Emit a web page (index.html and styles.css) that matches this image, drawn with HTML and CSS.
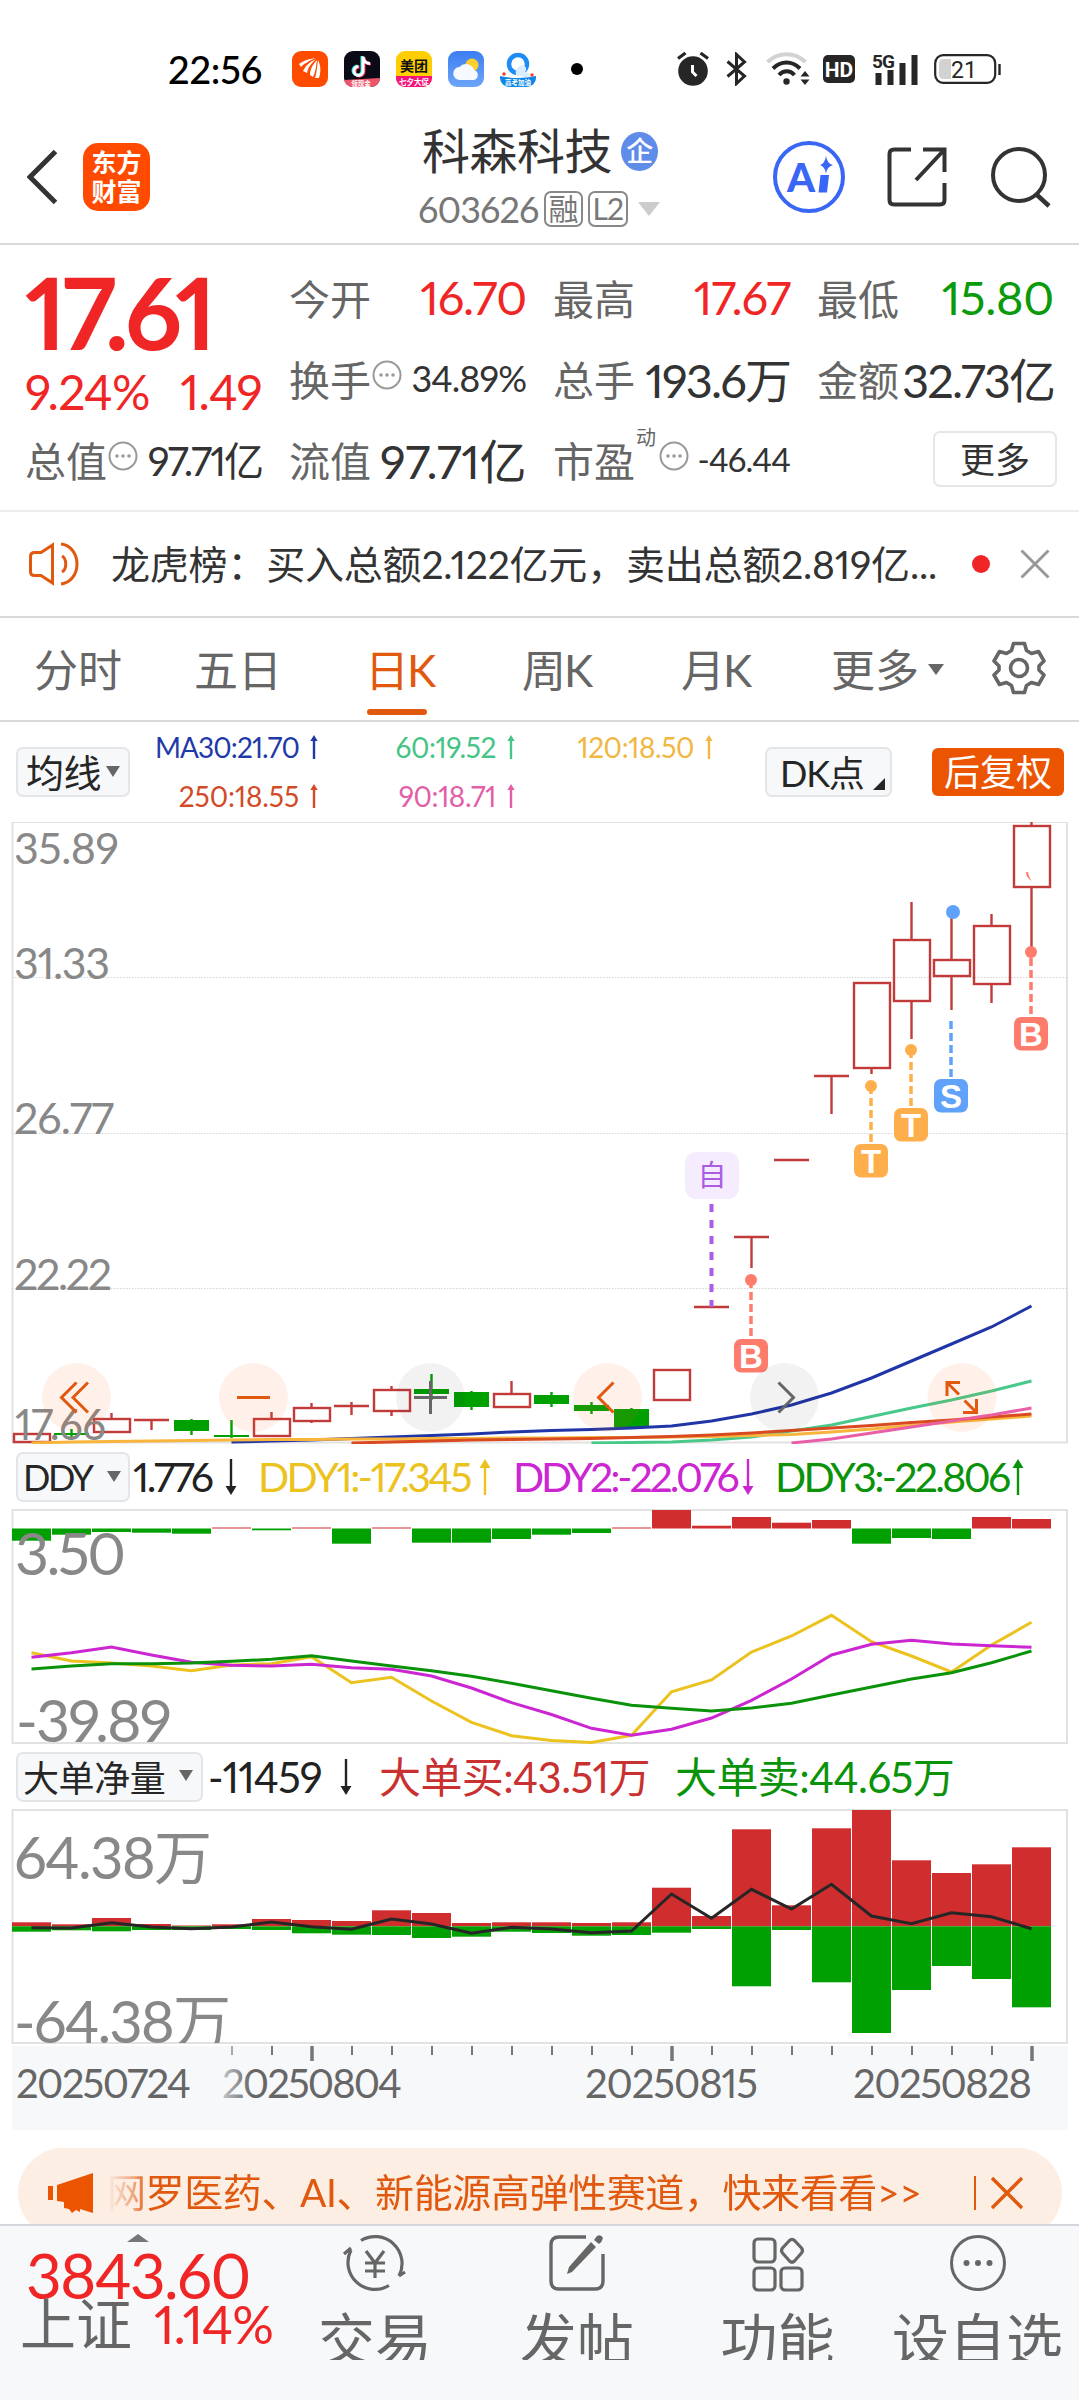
FILE: index.html
```html
<!DOCTYPE html>
<html lang="zh-CN">
<head>
    <meta charset="UTF-8">
    <meta name="viewport" content="width=device-width, initial-scale=1.0">
    <title>科森科技 603626</title>
    <link rel="stylesheet" href="styles.css">
</head>
<body>
    <svg class="defs" width="0" height="0">
        <symbol id="up" viewBox="0 0 12 36"><path d="M6 36V8" stroke="currentColor" stroke-width="2.4" vector-effect="non-scaling-stroke"/><path d="M6 0l5.5 9H.5z" fill="currentColor"/></symbol>
        <symbol id="down" viewBox="0 0 12 36"><path d="M6 0v28" stroke="currentColor" stroke-width="2.4" vector-effect="non-scaling-stroke"/><path d="M6 36l5.5-9H.5z" fill="currentColor"/></symbol>
        <symbol id="more" viewBox="0 0 30 30"><circle cx="15" cy="15" r="13.5" fill="none" stroke="#999" stroke-width="2"/><g fill="#999"><circle cx="9" cy="15" r="1.8"/><circle cx="15" cy="15" r="1.8"/><circle cx="21" cy="15" r="1.8"/></g></symbol>
    </svg>

    <div class="status-bar">
        <span class="clock">22:56</span>
        <div class="status-apps">
            <svg width="36" height="36" viewBox="0 0 36 36"><rect width="36" height="36" rx="9" fill="#ff4b00"/><g fill="#fff"><path d="M7 13c4-3 9-5 17-6-7 3-11 5-15 9z"/><path d="M11 20c3-6 7-9 13-12-5 5-8 8-9 14z"/><path d="M18 24c0-6 3-11 7-15-1 6-1 11-4 17z"/><path d="M23 27c2-6 2-12 3-18 3 6 3 12 1 18z"/></g></svg>
            <svg width="36" height="36" viewBox="0 0 36 36"><rect width="36" height="36" rx="9" fill="#0b0a17"/><g fill="none" stroke-width="3"><path d="M18 5v14.500a4.500 4.500 0 1 1-4.500-4.500M18 6c1 4 3 6 7 6" stroke="#26f0e6"/><path d="M20 6v14.500a4.500 4.500 0 1 1-4.500-4.500M20 7c1 4 3 6 7 6" stroke="#fe2c55"/><path d="M19 5.500V20a4.500 4.500 0 1 1-4.500-4.500M19 6.500c1 4 3 6 7 6" stroke="#fff"/></g><path d="M0 29l36-2a9 9 0 0 1-9 9H9a9 9 0 0 1-9-7z" fill="#f0566b"/><text x="17" y="34.500" class="app-tag" font-size="6.500">领现金</text></svg>
            <svg width="36" height="36" viewBox="0 0 36 36"><rect width="36" height="36" rx="9" fill="#ffce00"/><path d="M0 25h36v2a9 9 0 0 1-9 9H9a9 9 0 0 1-9-9z" fill="#f5137c"/><text x="18" y="19.500" class="app-name" font-size="14">美团</text><text x="18" y="33.500" class="app-tag" font-size="7.500">七夕大促</text></svg>
            <svg width="36" height="36" viewBox="0 0 36 36"><defs><linearGradient id="sky" x2="0" y2="1"><stop offset="0" stop-color="#3c7df2"/><stop offset="1" stop-color="#6da6f8"/></linearGradient></defs><rect width="36" height="36" rx="9" fill="url(#sky)"/><circle cx="24" cy="14" r="6.500" fill="#ffd02e"/><path d="M12 29a6.500 6.500 0 0 1-.5-13 8.500 8.500 0 0 1 14.500 3 5.200 5.200 0 0 1 0 10z" fill="#f6f9ff"/></svg>
            <svg width="36" height="36" viewBox="0 0 36 36"><circle cx="18" cy="13" r="9" fill="none" stroke="#1f8cf5" stroke-width="4.500"/><path d="M16 24a8 8 0 0 1 6-10c5 1 5 5 3 7 5 0 6 4 3 6z" fill="#dcecff"/><path d="M0 25q18 4 36 0v2a9 9 0 0 1-9 9H9a9 9 0 0 1-9-9z" fill="#0d86e6"/><circle cx="4" cy="23" r="1.800" fill="#f0432e"/><circle cx="32" cy="24" r="1.800" fill="#f0432e"/><text x="18" y="33.500" class="app-tag" font-size="6.500">高考加油</text></svg>
        </div>
        <span class="status-dot"></span>
        <div class="status-right">
            <svg width="32" height="34" viewBox="0 0 32 34"><circle cx="16" cy="19" r="14.800" fill="#262626"/><path d="M1 6.500L8.500 1M31 6.500L23.500 1" stroke="#262626" stroke-width="3.200"/><path d="M15.500 13v7l4 4" fill="none" stroke="#fff" stroke-width="3"/></svg>
            <svg width="22" height="34" viewBox="0 0 22 34"><path d="M1.500 9.500l17 14.500-8 7.500V2.500l8 7.500L1.500 24.500" fill="none" stroke="#262626" stroke-width="3"/></svg>
            <svg width="44" height="34" viewBox="0 0 44 34"><g fill="none" stroke-width="4"><path d="M1.500 10c11-10.500 27-10.500 38 0" stroke="#d2d2d2"/><path d="M7 16.500c8-8 19-8 27 0M13 23c4.500-5 11-5 15.500 0" stroke="#262626"/></g><circle cx="20.500" cy="29.500" r="3.200" fill="#262626"/><path d="M39 19l4.500 5.500h-9zM39 33l4.500-5.500h-9z" fill="#262626"/></svg>
            <svg width="32" height="28" viewBox="0 0 32 28"><rect width="32" height="28" rx="5" fill="#262626"/><text x="16" y="21.500" class="hd-text">HD</text></svg>
            <svg width="46" height="33" viewBox="0 0 46 33"><text x="0" y="14.500" class="net-text">5G</text><path d="M3.500 20h6v12h-6zM15.500 17h6v15h-6zM27.500 10h6v22h-6zM39.500 2h6v30h-6z" fill="#262626"/></svg>
            <svg width="67" height="30" viewBox="0 0 67 30"><rect x="1.200" y="1.200" width="60" height="27.600" rx="8" fill="none" stroke="#262626" stroke-width="2.200"/><path d="M17 5v20H9q-4 0-4-5V10q0-5 4-5z" fill="#d2d2d2"/><path d="M65.500 10v11" stroke="#262626" stroke-width="2.400"/><text x="30" y="23.500" class="battery-text">21</text></svg>
        </div>
    </div>

    <header class="top-bar">
        <svg class="back" width="32" height="56" viewBox="0 0 32 56"><path d="M28.500 2.500L3 28l25.500 25.500" fill="none" stroke="#333" stroke-width="5"/></svg>
        <div class="logo"><span>东方</span><span>财富</span></div>
        <div class="stock-title">
            <div class="stock-name">科森科技<span class="badge-qi">企</span></div>
            <div class="stock-code">603626<span class="tag">融</span><span class="tag">L2</span><i class="caret-light"></i></div>
        </div>
        <div class="top-actions">
            <svg width="74" height="74" viewBox="0 0 74 74"><circle cx="37" cy="37" r="34" fill="none" stroke="#3a66f5" stroke-width="4"/><text x="15" y="52" class="ai-text">A</text><path d="M48.500 35h8.500l-2 17.500h-8.500z" fill="#3a66f5"/><path d="M54 16q1 7.500 7 9-6 1.500-7 9-1-7.500-6-9 5-1.500 6-9z" fill="#3a66f5"/></svg>
            <svg width="60" height="60" viewBox="0 0 60 60"><g fill="none" stroke="#333" stroke-width="4"><path d="M24 2.500H7q-4.500 0-4.500 4.500v46q0 4.500 4.500 4.500h46q4.500 0 4.500-4.500V36"/><path d="M36 2.500h21.500V25M57.500 2.500L29 33"/></g></svg>
            <svg width="62" height="62" viewBox="0 0 62 62"><circle cx="29" cy="29" r="26" fill="none" stroke="#333" stroke-width="4"/><path d="M46 48l13 12" stroke="#333" stroke-width="4.500"/></svg>
        </div>
    </header>

    <section class="quote">
        <div class="price-block">
            <div class="price">17.61</div>
            <div class="change"><span>9.24%</span><span>1.49</span></div>
        </div>
        <div class="cell"><label>今开</label><b class="red">16.70</b></div>
        <div class="cell"><label>最高</label><b class="red">17.67</b></div>
        <div class="cell"><label>最低</label><b class="green">15.80</b></div>
        <div class="cell small"><label>换手<svg class="more"><use href="#more"/></svg></label><b>34.89%</b></div>
        <div class="cell"><label>总手</label><b>193.6万</b></div>
        <div class="cell"><label>金额</label><b>32.73亿</b></div>
        <div class="cell mid"><label>总值<svg class="more"><use href="#more"/></svg></label><b>97.71亿</b></div>
        <div class="cell wide"><label>流值</label><b>97.71亿</b></div>
        <div class="cell tiny"><label>市盈<sup>动</sup><svg class="more"><use href="#more"/></svg></label><b>-46.44</b></div>
        <div class="cell last"><button class="btn-more">更多</button></div>
    </section>

    <section class="notice">
        <svg class="speaker" width="54" height="44" viewBox="0 0 54 44"><g fill="none" stroke="#e0590f" stroke-width="3"><path d="M23.500 3v38L12 33.500H5.500q-4 0-4-4v-15q0-4 4-4H12z"/><path d="M30 14c5 3 5 13 0 16M29 2c9 1 16 9 16 20s-7 19-16 20" transform="translate(3 0)"/></g></svg>
        <span class="notice-text">龙虎榜：买入总额2.122亿元，卖出总额2.819亿...</span>
        <span class="notice-dot"></span>
        <svg width="30" height="30" viewBox="0 0 30 30"><path d="M1.500 1.500l27 27M28.500 1.500l-27 27" stroke="#999" stroke-width="3"/></svg>
    </section>

    <nav class="tabs">
        <span class="tab">分时</span>
        <span class="tab">五日</span>
        <span class="tab active">日K</span>
        <span class="tab">周K</span>
        <span class="tab">月K</span>
        <span class="tab">更多<i class="caret"></i></span>
        <svg class="gear" width="54" height="54" viewBox="0 0 54 54"><g fill="none" stroke="#666" stroke-width="3.600" stroke-linejoin="round"><path d="M21.500 2.500h11l2 7 5 3 7-2 5.500 9.500-5 5v4l5 5-5.500 9.500-7-2-5 3-2 7h-11l-2-7-5-3-7 2L2 34l5-5v-4l-5-5 5.500-9.500 7 2 5-3z"/><circle cx="27" cy="27" r="8.500"/></g></svg>
    </nav>

    <div class="indicator-row">
        <button class="chip chip-ma">均线<i class="caret"></i></button>
        <div class="ma-list">
            <span class="ma30">MA30:21.70<svg><use href="#up"/></svg></span>
            <span class="ma60">60:19.52<svg><use href="#up"/></svg></span>
            <span class="ma120">120:18.50<svg><use href="#up"/></svg></span>
            <span class="ma250">250:18.55<svg><use href="#up"/></svg></span>
            <span class="ma90">90:18.71<svg><use href="#up"/></svg></span>
        </div>
        <button class="chip chip-dk">DK点</button>
        <button class="chip-fq">后复权</button>
    </div>

    <svg id="kline" class="panel" width="1079" height="622" viewBox="0 822 1079 622"></svg>

    <div class="legend">
        <button class="chip chip-ddy">DDY<i class="caret"></i></button>
        <span class="v1">1.776<svg><use href="#down"/></svg></span>
        <span class="v2">DDY1:-17.345<svg><use href="#up"/></svg></span>
        <span class="v3">DDY2:-22.076<svg><use href="#down"/></svg></span>
        <span class="v4">DDY3:-22.806<svg><use href="#up"/></svg></span>
    </div>

    <svg id="ddy" class="panel" width="1079" height="235" viewBox="0 1509 1079 235"></svg>

    <div class="legend legend-vol">
        <button class="chip chip-vol">大单净量<i class="caret"></i></button>
        <span class="w1">-11459<svg><use href="#down"/></svg></span>
        <span class="w2">大单买:43.51万</span>
        <span class="w3">大单卖:44.65万</span>
    </div>

    <svg id="vol" class="panel" width="1079" height="321" viewBox="0 1809 1079 321"></svg>

    <div class="banner-wrap">
        <div class="banner">
            <svg width="46" height="40" viewBox="0 0 46 40"><path d="M0 13h5v14H0zM9 12L45 0v40l-13-4v3l-4-2-4 3-3-4-5-1v-6l-7-1z" fill="#eb5502"/></svg>
            <span class="banner-text">网罗医药、AI、新能源高弹性赛道，快来看看&gt;&gt;</span>
            <svg class="banner-close" width="34" height="34" viewBox="0 0 34 34"><path d="M2 2l30 30M32 2L2 32" stroke="#e0590f" stroke-width="3.400"/></svg>
        </div>
    </div>

    <footer class="bottom-bar">
        <div class="index">
            <i class="caret-up"></i>
            <div class="index-value">3843.60</div>
            <div class="index-row"><span>上证</span><b>1.14%</b></div>
        </div>
        <div class="action">
            <svg width="66" height="60" viewBox="0 0 66 60"><g fill="none" stroke="#666" stroke-width="3.200"><path d="M19 7.500A27 27 0 0 1 57 43M47 52.500A27 27 0 0 1 9 17M9 15L2 21M57 43l6-4" /><path d="M24 18l9 12 9-12M33 30v15M23 30h20M23 38h20"/></g></svg>
            <span>交易</span>
        </div>
        <div class="action">
            <svg width="60" height="60" viewBox="0 0 60 60"><path d="M39 4H12Q4 4 4 12v36q0 8 8 8h36q8 0 8-8V21" fill="none" stroke="#666" stroke-width="3.400"/><path d="M44 9l5 5-24 25-5 2 2-7zM50 3q4-2 6 2-1 4-4 6l-5-4z" fill="#666"/></svg>
            <span>发帖</span>
        </div>
        <div class="action">
            <svg width="60" height="60" viewBox="0 0 60 60"><g fill="none" stroke="#666" stroke-width="3.200"><rect x="6" y="6" width="21" height="23" rx="4"/><rect x="6" y="35" width="21" height="22" rx="4"/><rect x="33" y="35" width="21" height="22" rx="4"/><path d="M41.500 7.500q2.500-2.500 5 0l7 7.500q2 2.500 0 5l-7 8q-2.500 2.500-5 0l-7-8q-2-2.500 0-5z"/></g></svg>
            <span>功能</span>
        </div>
        <div class="action">
            <svg width="60" height="60" viewBox="0 0 60 60"><circle cx="30" cy="30" r="26.500" fill="none" stroke="#666" stroke-width="3"/><g fill="#666"><circle cx="18.500" cy="30" r="3"/><circle cx="30" cy="30" r="3"/><circle cx="41.500" cy="30" r="3"/></g></svg>
            <span>设自选</span>
        </div>
    </footer>

    <script src="chart.js"></script>
</body>
</html>
```
FILE: styles.css
```css
:root {
    --red: #f02626;
    --green: #0a9a0a;
    --orange: #e0590f;
    --text: #333;
    --gray: #666;
    --line: #d9d9d9;
    --chip-bg: #f7f8fa;
}

* {
    box-sizing: border-box;
}

body {
    margin: 0;
    width: 1079px;
    height: 2400px;
    overflow: hidden;
    background: #fff;
    color: var(--text);
    font-family: Lato, "Noto Sans CJK SC", sans-serif;
    font-variant-numeric: proportional-nums;
}

button {
    font: inherit;
    color: inherit;
    padding: 0;
    margin: 0;
    border: 0;
    background: none;
}

svg {
    display: block;
    flex: none;
}

.defs {
    position: absolute;
}

b {
    font-weight: 400;
}

.caret {
    display: inline-block;
    border: 7px solid transparent;
    border-top: 11px solid var(--gray);
    border-bottom: 0;
}

/* status bar */
.status-bar {
    display: flex;
    align-items: center;
    height: 111px;
    padding: 27px 78px 0 168px;
}

.clock {
    width: 124px;
    font-size: 38px;
    font-weight: 500;
    color: #000;
    letter-spacing: -0.2px;
    white-space: nowrap;
}

.status-apps {
    display: flex;
    gap: 16px;
}

.app-tag,
.app-name {
    font-family: "Noto Sans CJK SC", sans-serif;
    font-weight: 700;
    text-anchor: middle;
    fill: #fff;
}

.app-name {
    fill: #111;
}

.status-dot {
    width: 12px;
    height: 12px;
    margin-left: 35px;
    border-radius: 50%;
    background: #000;
}

.status-right {
    display: flex;
    align-items: center;
    margin-left: auto;
}

.status-right svg:nth-child(2) { margin-left: 17px; }
.status-right svg:nth-child(3) { margin-left: 18px; }
.status-right svg:nth-child(4) { margin-left: 13px; }
.status-right svg:nth-child(5) { margin-left: 17px; }
.status-right svg:nth-child(6) { margin-left: 16px; }

.hd-text {
    font: 700 21px Roboto, sans-serif;
    text-anchor: middle;
    fill: #fff;
}

.net-text {
    font: 700 19px Roboto, sans-serif;
    letter-spacing: -1px;
    fill: #262626;
}

.battery-text {
    font: 400 23px Roboto, sans-serif;
    text-anchor: middle;
    fill: #262626;
}

/* header */
.top-bar {
    display: flex;
    align-items: center;
    height: 134px;
    padding: 0 27px;
    border-bottom: 2px solid var(--line);
}

.logo {
    display: flex;
    flex-direction: column;
    align-items: center;
    justify-content: center;
    width: 67px;
    height: 68px;
    margin-left: 24px;
    border-radius: 15px;
    background: #ff4a00;
    color: #fff;
    font-size: 25px;
    font-weight: 700;
    line-height: 29px;
}

.stock-title {
    width: 240px;
    margin-left: 268px;
}

.stock-name {
    display: flex;
    align-items: center;
    gap: 9px;
    margin-left: 4px;
    font-size: 48px;
    line-height: 60px;
    letter-spacing: -0.5px;
    white-space: nowrap;
}

.badge-qi {
    width: 39px;
    height: 39px;
    border-radius: 50%;
    background: #5f8ce9;
    color: #fff;
    font-size: 27px;
    line-height: 37px;
    font-weight: 500;
    text-align: center;
}

.stock-code {
    display: flex;
    align-items: center;
    height: 52px;
    padding-top: 3px;
    font-size: 36px;
    color: #777;
    letter-spacing: -0.9px;
}

.tag {
    height: 36px;
    margin-left: 5px;
    padding: 0 3px;
    border: 2px solid #888;
    border-radius: 7px;
    font-size: 30px;
    line-height: 31px;
    color: #777;
    letter-spacing: -1px;
}

.caret-light {
    margin-left: 10px;
    border: 11px solid transparent;
    border-top: 14px solid #ccc;
    border-bottom: 0;
}

.top-actions {
    display: flex;
    align-items: center;
    margin-left: auto;
}

.top-actions svg:nth-child(2) { margin-left: 41px; }
.top-actions svg:nth-child(3) { margin-left: 43px; }

.ai-text {
    font: 900 40px Lato, sans-serif;
    fill: #3a66f5;
}

/* quote */
.quote {
    display: grid;
    grid-template-columns: repeat(4, 237px);
    grid-template-rows: repeat(3, 81px);
    column-gap: 27px;
    height: 267px;
    padding: 11px 25px 0;
    border-bottom: 2px solid #ededed;
}

.price-block {
    grid-row: span 2;
}

.price {
    padding-top: 5px;
    font-size: 100px;
    line-height: 100px;
    font-weight: 700;
    color: var(--red);
    letter-spacing: -4px;
}

.change {
    display: flex;
    justify-content: space-between;
    font-size: 48px;
    line-height: 62px;
    color: var(--red);
    letter-spacing: -0.8px;
}

.cell {
    display: flex;
    align-items: center;
    justify-content: space-between;
    font-size: 47px;
    letter-spacing: -1.9px;
    white-space: nowrap;
}

.cell label {
    display: flex;
    align-items: center;
    font-size: 41px;
    letter-spacing: 0;
    color: var(--gray);
}

.cell sup {
    width: 22px;
    margin: 0 0 43px 1px;
    font-size: 20px;
    line-height: 20px;
}

.more {
    width: 30px;
    height: 30px;
    margin: 0 0 5px 1px;
}

.cell.small { font-size: 36px; letter-spacing: -1px; }
.cell.mid { font-size: 40px; letter-spacing: -2px; }
.cell.wide { letter-spacing: -0.4px; }
.cell.tiny { font-size: 33px; letter-spacing: -0.9px; }
.cell.last { justify-content: flex-end; }

.cell .red { color: var(--red); letter-spacing: -1.2px; }
.cell .green { color: var(--green); letter-spacing: -0.3px; }

.btn-more {
    width: 124px;
    height: 56px;
    margin-right: -3px;
    border: 2px solid #e6e6e6;
    border-radius: 7px;
    font-size: 35px;
    line-height: 50px;
    letter-spacing: 0;
}

/* notice */
.notice {
    display: flex;
    align-items: center;
    height: 106px;
    padding: 0 29px 0 29px;
    border-bottom: 2px solid var(--line);
}

.notice-text {
    width: 831px;
    margin-left: 28px;
    padding-bottom: 5px;
    font-size: 39px;
    letter-spacing: -0.2px;
    white-space: nowrap;
}

.notice-dot {
    width: 18px;
    height: 18px;
    margin: 0 auto 0 30px;
    border-radius: 50%;
    background: var(--red);
}

/* tabs */
.tabs {
    display: flex;
    align-items: center;
    height: 104px;
    padding: 0 33px 2px 34px;
    border-bottom: 2px solid var(--line);
    font-size: 44px;
    color: var(--gray);
}

.tab {
    position: relative;
    width: 160px;
    white-space: nowrap;
}

.tab:nth-child(3) { margin-left: 11px; width: 157px; letter-spacing: -2px; }
.tab:nth-child(4) { width: 159px; letter-spacing: -2px; }
.tab:nth-child(5) { width: 150px; letter-spacing: -2px; }
.tab .caret { margin: 0 0 12px 9px; border-width: 11px 8px 0; }

.tab.active {
    color: var(--orange);
}

.tab.active::after {
    content: "";
    position: absolute;
    left: 2px;
    bottom: -15px;
    width: 60px;
    height: 6px;
    border-radius: 3px;
    background: var(--orange);
}

.gear {
    margin-left: auto;
}

/* moving averages */
.indicator-row {
    display: flex;
    align-items: center;
    height: 100px;
    padding: 0 15px 1px 16px;
}

.chip {
    display: flex;
    align-items: center;
    flex: none;
    height: 50px;
    border: 2px solid #e4e5e8;
    border-radius: 7px;
    background: var(--chip-bg);
    color: #262626;
    white-space: nowrap;
}

.chip-ma {
    width: 114px;
    padding-left: 8px;
    font-size: 38px;
    line-height: 40px;
    letter-spacing: -0.5px;
}

.chip-ma .caret {
    margin-left: 5px;
}

.ma-list {
    display: grid;
    grid-template-columns: 189px 197px 198px;
    grid-auto-rows: 49px;
}

.ma-list span {
    display: flex;
    align-items: center;
    justify-content: flex-end;
    font-size: 28px;
    letter-spacing: -0.4px;
}

.ma-list svg {
    width: 10px;
    height: 24px;
    margin-left: 10px;
}

.ma-list .ma30 { color: #1f3aa8; letter-spacing: -0.9px; }
.ma60 { color: #45c485; }
.ma120 { color: #f2b743; }
.ma-list .ma250 { color: #d24a26; letter-spacing: -0.1px; }
.ma90 { color: #e25fa8; }

.chip-dk {
    position: relative;
    width: 127px;
    margin-left: 51px;
    padding: 0 0 2px 13px;
    font-size: 36px;
    letter-spacing: -1.2px;
}

.chip-dk::after {
    content: "";
    position: absolute;
    right: 5px;
    bottom: 5px;
    border-left: 12px solid transparent;
    border-bottom: 12px solid #262626;
}

.chip-fq {
    width: 132px;
    height: 48px;
    margin-left: auto;
    border-radius: 6px;
    background: #eb5502;
    color: #fff;
    font-size: 36px;
    line-height: 44px;
    white-space: nowrap;
}

/* charts */
.panel {
    width: 1079px;
}

.axis { fill: #888; }
.date { fill: #666; font-size: 40px; }
.mark { font: 700 33px "Liberation Sans", sans-serif; text-anchor: middle; fill: #fff; }
.mark-zi { font-size: 29px; text-anchor: middle; fill: #ab5ce0; }

.legend {
    display: flex;
    align-items: center;
    height: 65px;
    padding-left: 16px;
    font-size: 41px;
    white-space: nowrap;
}

.legend span {
    display: flex;
    align-items: center;
    flex: none;
}

.legend span svg {
    width: 12px;
    height: 36px;
    margin-left: auto;
}

.chip-ddy {
    width: 114px;
    padding-left: 5px;
    font-size: 36px;
    letter-spacing: -2.4px;
}

.chip-ddy .caret { margin-left: 15px; }

.chip-vol {
    width: 187px;
    padding: 0 0 2px 5px;
    font-size: 36px;
    letter-spacing: -0.4px;
}

.chip-vol .caret { margin-left: 14px; }

.v1, .w1 { color: #222; }
.v1 { width: 104px; margin-left: 3px; letter-spacing: -2.4px; }
.v2 { width: 233px; margin-left: 21px; color: #ecc21f; letter-spacing: -2.6px; }
.v3 { width: 241px; margin-left: 22px; color: #cc26d2; letter-spacing: -3.1px; }
.v4 { width: 249px; margin-left: 21px; color: #0a930a; letter-spacing: -2.7px; }

.legend-vol { font-size: 42px; }
.w1 { width: 144px; margin-left: 5px; letter-spacing: -1px; }
.w2 { width: 296px; margin-left: 27px; padding-bottom: 4px; color: #c93030; letter-spacing: -0.6px; }
.w3 { padding-bottom: 4px; color: #0a930a; letter-spacing: -0.6px; }

/* banner */
.banner-wrap {
    height: 94px;
    padding: 18px 17px 0 18px;
    overflow: hidden;
}

.banner {
    display: flex;
    align-items: center;
    height: 90px;
    padding: 0 38px 0 30px;
    border-radius: 45px;
    background: #fdeee4;
    color: var(--orange);
}

.banner-text {
    width: 843px;
    margin-left: 13px;
    padding-bottom: 7px;
    font-size: 39px;
    letter-spacing: -0.4px;
    white-space: nowrap;
    -webkit-mask-image: linear-gradient(90deg, transparent 0, rgba(0, 0, 0, 0.5) 28px, #000 40px);
    mask-image: linear-gradient(90deg, transparent 0, rgba(0, 0, 0, 0.5) 28px, #000 40px);
}

.banner-close {
    box-sizing: content-box;
    margin-left: auto;
    padding-left: 14px;
    border-left: 2px solid var(--orange);
}

/* bottom bar */
.bottom-bar {
    display: grid;
    grid-template-columns: 275px 200px 204px 197px 203px;
    height: 176px;
    border-top: 2px solid #d6d7de;
    background: #f7f8fa;
    color: var(--gray);
}

.index {
    position: relative;
    padding: 16px 0 0 20px;
}

.caret-up {
    position: absolute;
    left: 127px;
    top: 8px;
    border: 11px solid transparent;
    border-bottom: 8px solid #777;
    border-top: 0;
}

.index-value {
    padding-left: 6px;
    font-size: 62px;
    line-height: 66px;
    color: var(--red);
    letter-spacing: -1.7px;
}

.index-row {
    display: flex;
    align-items: center;
    gap: 22px;
    height: 48px;
    margin-top: -8px;
    font-size: 56px;
    line-height: 48px;
}

.index-row b {
    font-size: 52px;
    color: var(--red);
    letter-spacing: -1px;
}

.action {
    display: flex;
    flex-direction: column;
    align-items: center;
    padding-top: 7px;
}

.action span {
    height: 50px;
    margin-top: 17px;
    overflow: hidden;
    font-size: 57px;
    line-height: 58px;
    white-space: nowrap;
}
```
FILE: chart.js
```js
const RED = '#c23b3b';
const UP = '#d02e2e';
const DOWN = '#00a000';
const STEP = 40;

const cx = i => 31.5 + i * STEP;

function line(x1, y1, x2, y2, color, w, extra) {
    return `<line x1="${x1}" y1="${y1}" x2="${x2}" y2="${y2}" stroke="${color}" stroke-width="${w}" ${extra || ''}/>`;
}

function rect(x, y, w, h, attrs) {
    return `<rect x="${x}" y="${y}" width="${w}" height="${h}" ${attrs}/>`;
}

function curve(values, color, start, w) {
    const pts = values.map((v, i) => `${cx(i + (start || 0))},${v}`).join(' ');
    return `<polyline points="${pts}" fill="none" stroke="${color}" stroke-width="${w || 3}"/>`;
}

function frame(y, h) {
    return rect(12.5, y, 1054.5, h, 'fill="none" stroke="#e2e2e2" stroke-width="2"');
}

function label(text, x, y, size, len, extra) {
    return `<text class="axis" x="${x}" y="${y}" font-size="${size}" textLength="${len}" ${extra || ''}>${text}</text>`;
}

// candles: [type, bodyTop, bodyBottom, high, low]
const candles = [
    ['r', 1434, 1442, 1434, 1442], ['g', 1433, 1435, 1429, 1437], ['r', 1419, 1432, 1413, 1432],
    ['l', 1420, 1420, 1420, 1430], ['g', 1420, 1431, 1419, 1435], ['g', 1435, 1437, 1420, 1438],
    ['r', 1419, 1436, 1412, 1436], ['r', 1408, 1421, 1403, 1423], ['l', 1406, 1406, 1402, 1415],
    ['r', 1390, 1411, 1386, 1416], ['g', 1389, 1394, 1374, 1400], ['g', 1392, 1407, 1391, 1410],
    ['r', 1394, 1407, 1381, 1407], ['g', 1395, 1404, 1392, 1407], ['g', 1405, 1411, 1402, 1414],
    ['g', 1409, 1427, 1408, 1427], ['r', 1370, 1400, 1370, 1400], ['l', 1307, 1307, 1307, 1307],
    ['l', 1237, 1237, 1237, 1268], ['l', 1160, 1160, 1160, 1160], ['l', 1076, 1076, 1076, 1114],
    ['r', 983, 1068, 983, 1074], ['r', 940, 1001, 902, 1039], ['r', 960, 976, 918, 1010],
    ['r', 926, 984, 914, 1003], ['r', 826, 887, 822, 949]
];

function drawKline() {
    let s = frame(822, 620.5);
    [977.5, 1133.5, 1288.5].forEach(y => {
        s += line(12, y, 1067, y, '#d4d4d4', 1, 'stroke-dasharray="1.5 1.5"');
    });

    candles.forEach(([type, top, bottom, high, low], i) => {
        const x = cx(i);
        if (type === 'g') {
            s += rect(x - 17.5, top, 35, bottom - top, `fill="${DOWN}"`);
            s += line(x, high, x, low, DOWN, 2.4);
            return;
        }
        if (type === 'l') {
            s += line(x - 17.5, top, x + 17.5, top, RED, 2.4);
            if (low > high) s += line(x, high, x, low, RED, 2.4);
            return;
        }
        s += rect(x - 17.5, top, 36, bottom - top, `fill="none" stroke="${RED}" stroke-width="2.4"`);
        if (high < top) s += line(x, high, x, top, RED, 2.4);
        if (low > bottom) s += line(x, bottom, x, low, RED, 2.4);
    });
    s += '<path d="M1026 872q0 6 6 9-3-3-4-9z" fill="#ff7d6d"/>';

    // moving averages
    s += curve([1443, 1442, 1441, 1440, 1438.5, 1437, 1435.5, 1434, 1432, 1430.5, 1429.5, 1428, 1426, 1421, 1414, 1405, 1393, 1378, 1361, 1344, 1327, 1306].slice(1), '#2036a6', 5);
    s += curve([1443, 1442.5, 1442, 1440, 1437, 1431, 1425, 1416.5, 1408, 1400, 1391, 1381], '#48c98a', 14);
    s += curve([1443, 1442, 1441.5, 1441, 1440.5, 1440, 1439.5, 1439.5, 1439, 1439, 1438.5, 1438.5, 1438, 1438, 1437.5, 1437.5, 1437, 1436.5, 1435.5, 1434.5, 1432, 1429, 1425.5, 1422, 1419, 1416], '#f8b53c', 0);
    s += curve([1443, 1442, 1441, 1440, 1439.5, 1439, 1438.5, 1437.5, 1436.5, 1435, 1433, 1430.5, 1428, 1425.5, 1422.5, 1420, 1417, 1414], '#d94a20', 8);
    s += curve([1443, 1439, 1433, 1427, 1421, 1415, 1408], '#e85fa8', 19);

    s += label('35.89', 14, 863.5, 43, 105);
    s += label('31.33', 14, 979, 43, 96);
    s += label('26.77', 14, 1134, 43, 100);
    s += label('22.22', 14, 1289.5, 43, 98);
    s += label('17.66', 15, 1440, 42, 91);

    // 自 flag and buy / sell / trade markers
    s += line(711.5, 1204, 711.5, 1307, '#ab5ce0', 4, 'stroke-dasharray="8 8"');
    s += rect(685, 1152, 54, 47, 'rx="11" fill="#f5edff"');
    s += '<text class="mark-zi" x="712" y="1186">自</text>';
    [
        ['B', 751, 1280, 1280, 1339, '#fd7c6c'],
        ['T', 871, 1086, 1086, 1144, '#ffae4c'],
        ['T', 911, 1050, 1050, 1108, '#ffae4c'],
        ['S', 951, 912, 1021, 1079, '#60a2fa'],
        ['B', 1031, 952, 958, 1017, '#fd7c6c']
    ].forEach(([t, x, dot, from, box, color]) => {
        s += line(x, from, x, box - 2, color, 3.5, 'stroke-dasharray="8 4"');
        s += `<circle cx="${t === 'S' ? x + 2 : x}" cy="${dot}" r="${t === 'S' ? 7 : 6}" fill="${color}"/>`;
        s += rect(x - 17, box, 34, 33.5, `rx="7" fill="${color}"`);
        s += `<text class="mark" x="${x}" y="${box + 28.5}">${t}</text>`;
    });

    // round controls over the chart
    const o = 'fill="none" stroke="#e0590f" stroke-width="3"';
    const g = 'fill="none" stroke="#666" stroke-width="3"';
    [76.5, 253.5, 430.5, 607.5, 784.5, 962].forEach((x, i) => {
        const fill = (i === 2 || i === 4) ? 'rgba(0,0,0,0.05)' : 'rgba(255,100,20,0.09)';
        s += `<circle cx="${x}" cy="1397.5" r="34.5" fill="${fill}"/>`;
    });
    s += `<path d="M76.5 1382.5l-15 15 15 15M88 1382.5l-15 15 15 15" ${o}/>`;
    s += `<path d="M237 1397.5h33" ${o}/>`;
    s += `<path d="M414 1397.5h33M430.5 1381v33" ${g}/>`;
    s += `<path d="M613.5 1382.5l-15 15 15 15" ${o}/>`;
    s += `<path d="M778.5 1382.5l15 15-15 15" ${g}/>`;
    s += `<path d="M960 1382.5h-13v13.5M947 1382.5l12 12M963 1412.5h13.5V1399M976.5 1412.5l-12-12" ${o}/>`;

    document.getElementById('kline').innerHTML = s;
}

function drawDdy() {
    const zero = 1528.5;
    const bars = [1540.7, 1534.7, 1532, 1532.7, 1533.7, 1527.5, 1530.3, 1527.5, 1543.7, 1527.5, 1542.7, 1542.7, 1539, 1534.7, 1533, 1527.5, 1510, 1525.7, 1517, 1522.7, 1520, 1543.7, 1538, 1539, 1517, 1519];
    let s = frame(1510, 233);
    bars.forEach((v, i) => {
        const up = v < zero;
        s += rect(12 + i * STEP, Math.min(v, zero), 39, Math.abs(v - zero), `fill="${up ? UP : DOWN}"`);
    });
    s += label('3.50', 15, 1575, 59, 111);
    s += label('-39.89', 16, 1741.5, 59, 156);
    s += curve([1652.7, 1661, 1663, 1666, 1670.7, 1665, 1663.7, 1656.7, 1682.7, 1677.3, 1701, 1722.3, 1735.7, 1740.5, 1742.5, 1735.3, 1691.7, 1680, 1652, 1636, 1615.3, 1641.7, 1656, 1672, 1645, 1622.3], '#ecc21f');
    s += curve([1657.3, 1652.7, 1647, 1655, 1662.3, 1665.3, 1666, 1664.3, 1667.7, 1669.3, 1676, 1688, 1702.7, 1714.5, 1728.3, 1735.3, 1729.3, 1718, 1700.3, 1679, 1655, 1644.3, 1640.3, 1644, 1645.7, 1647.3], '#cc26d2');
    s += curve([1669, 1666, 1663.7, 1663.7, 1663, 1661.3, 1659.3, 1655.7, 1661, 1666, 1670.7, 1676.3, 1683.3, 1690.7, 1698.3, 1705.3, 1708.3, 1711, 1708, 1703.3, 1695, 1687, 1679, 1672.7, 1662.7, 1651], '#0a930a');
    document.getElementById('ddy').innerHTML = s;
}

function drawVol() {
    const zero = 1926.3;
    const buy = [1922.3, 1924.3, 1918, 1924, 1925.5, 1924.3, 1919, 1920, 1921, 1910.3, 1913, 1923, 1922.3, 1922.3, 1923, 1922.3, 1887.7, 1916, 1829.3, 1905.3, 1828.3, 1810, 1860.3, 1873, 1864.3, 1847.3];
    const sell = [1931.7, 1930.3, 1931.3, 1930, 1930, 1929, 1930, 1933.3, 1934.7, 1935, 1938, 1936.7, 1931.7, 1933, 1935.7, 1935, 1932.7, 1929, 1986.3, 1930, 1982.3, 2033, 1990, 1966, 1979, 2007.3];
    const net = [1927.7, 1928, 1922.7, 1927, 1928.7, 1927, 1922, 1926.7, 1929.3, 1919, 1924, 1933.3, 1927.3, 1929, 1932.7, 1931, 1894, 1918.3, 1889.3, 1909, 1884.3, 1916, 1923.7, 1912.7, 1916.7, 1928.7];
    let s = rect(12, 2046, 1056, 84, 'fill="#f7f8fa"') + frame(1810, 233);
    buy.forEach((v, i) => {
        const x = 12 + i * STEP;
        s += rect(x, v, 39, zero - v, `fill="${UP}"`);
        s += rect(x, zero, 39, sell[i] - zero, `fill="${DOWN}"`);
    });
    s += curve(net, '#262626', 0, 3);

    s += '<clipPath id="clip"><rect x="12" y="1810" width="1056" height="233"/></clipPath>';
    s += label('64.38万', 14, 1879, 58, 198);
    s += label('-64.38万', 14, 2043, 58, 217, 'clip-path="url(#clip)"');

    // date axis
    for (let i = 5; i < 26; i++) {
        const major = i === 7 || i === 16 || i === 25;
        s += line(cx(i) + 0.5, 2046, cx(i) + 0.5, major ? 2061 : 2055, i === 5 ? '#aaa' : '#777', major ? 3.5 : 2);
    }
    s += '<linearGradient id="fade" gradientUnits="userSpaceOnUse" x1="215" x2="252"><stop offset="0" stop-color="#666" stop-opacity="0.2"/><stop offset="1" stop-color="#666"/></linearGradient>';
    s += '<text class="date" x="16" y="2098" textLength="175">20250724</text>';
    s += '<text class="date" x="222" y="2098" textLength="180" style="fill:url(#fade)">20250804</text>';
    s += '<text class="date" x="585" y="2098" textLength="173">20250815</text>';
    s += '<text class="date" x="853" y="2098" textLength="179">20250828</text>';
    document.getElementById('vol').innerHTML = s;
}

drawKline();
drawDdy();
drawVol();
```
